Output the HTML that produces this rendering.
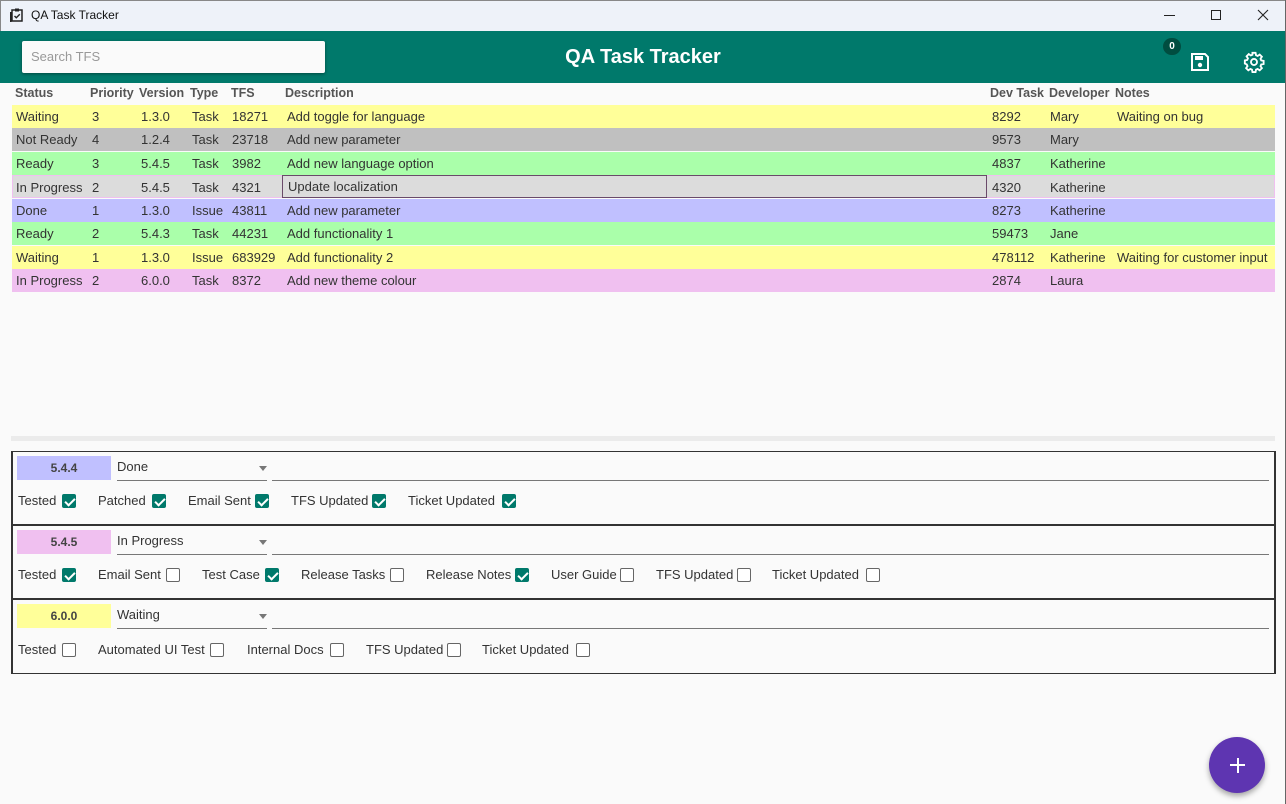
<!DOCTYPE html>
<html><head><meta charset="utf-8"><style>
*{margin:0;padding:0;box-sizing:border-box}
body{width:1286px;height:804px;overflow:hidden;background:#fafafa;font-family:"Liberation Sans",sans-serif;font-size:13px;color:#333;position:relative}
.a{position:absolute}
.tb{left:0;top:0;width:1286px;height:31px;background:#eef2f9;border:1px solid #888;border-bottom:none}
.hd{left:0;top:31px;width:1286px;height:52px;background:#00796b}
.row{position:absolute;left:12px;width:1263px;height:23px;line-height:23px}
.row span{position:absolute;top:0;white-space:nowrap}
.th{position:absolute;top:86px;font-weight:bold;color:#555;font-size:12.5px}
.pn{position:absolute;left:11px;width:1265px;border:2px solid #333;border-top-width:1px}
.ver{position:absolute;left:4px;width:94px;height:24px;line-height:24px;text-align:center;font-weight:bold;font-size:12px;color:#444}
.dd{position:absolute;left:104px;width:150px;height:25px;border-bottom:1px solid #777;line-height:22px}
.dd:after{content:"";position:absolute;right:0;top:10px;border:4px solid transparent;border-top:5px solid #777}
.ln{position:absolute;left:259px;right:5px;height:25px;border-bottom:1px solid #777}
.ck{position:absolute;white-space:nowrap;line-height:16px}
.cb{position:absolute;width:14px;height:14px;border:1.5px solid #666;border-radius:2px;background:#fff}
.cb.on{background:#00796b;border-color:#00796b}
.cb.on:after{content:"";position:absolute;left:3.5px;top:0.5px;width:4px;height:8px;border:solid #fff;border-width:0 2px 2px 0;transform:rotate(45deg)}
</style></head><body>
<div class="a tb"></div>
<svg class="a" style="left:9px;top:8px" width="15" height="15" viewBox="0 0 15 15"><rect x="3" y="2" width="10" height="11" fill="none" stroke="#222" stroke-width="1.5"/><rect x="1" y="4" width="1.5" height="10" fill="#222"/><rect x="6" y="0.5" width="4" height="3" fill="#222"/><path d="M5.5 8l1.8 1.8 3.5-3.5" fill="none" stroke="#222" stroke-width="1.4"/></svg>
<div class="a" style="left:31px;top:8px;font-size:12px;color:#111">QA Task Tracker</div>
<div class="a" style="left:1164px;top:15px;width:11px;height:1px;background:#222"></div>
<div class="a" style="left:1211px;top:10px;width:10px;height:10px;border:1px solid #222"></div>
<svg class="a" style="left:1257px;top:9px" width="12" height="12"><path d="M1 1L11 11M11 1L1 11" stroke="#222" stroke-width="1.1"/></svg>
<div class="a hd"></div>
<div class="a" style="left:22px;top:41px;width:303px;height:32px;background:#fafafa;border-radius:2px;box-shadow:0 1px 3px rgba(0,0,0,.4);line-height:32px;padding-left:9px;color:#999;font-size:13px">Search TFS</div>
<div class="a" style="left:0;width:1286px;top:46px;text-align:center;color:#fff;font-size:20px;font-weight:bold">QA Task Tracker</div>
<div class="a" style="left:1163px;top:38px;width:18px;height:17px;border-radius:9px;background:#004d40;color:#fff;font-size:10px;font-weight:bold;text-align:center;line-height:17px">0</div>
<svg class="a" style="left:1190px;top:52px" width="20" height="20" viewBox="0 0 20 20"><path d="M2 2h13l3 3v13H2z" fill="none" stroke="#fff" stroke-width="2"/><rect x="5" y="4" width="8" height="4" fill="#fff"/><circle cx="10" cy="13" r="2.2" fill="#fff"/></svg>
<svg class="a" style="left:1243px;top:51px" width="22" height="22" viewBox="0 0 24 24"><path fill="none" stroke="#fff" stroke-width="2" d="M10.3 2h3.4l.5 2.6 1.8.8 2.2-1.5 2.4 2.4-1.5 2.2.8 1.8 2.6.5v3.4l-2.6.5-.8 1.8 1.5 2.2-2.4 2.4-2.2-1.5-1.8.8-.5 2.6h-3.4l-.5-2.6-1.8-.8-2.2 1.5-2.4-2.4 1.5-2.2-.8-1.8L2 13.7v-3.4l2.6-.5.8-1.8-1.5-2.2 2.4-2.4 2.2 1.5 1.8-.8z"/><circle cx="12" cy="12" r="3.3" fill="none" stroke="#fff" stroke-width="2"/></svg>

<div class="th" style="left:15px">Status</div><div class="th" style="left:90px">Priority</div><div class="th" style="left:139px">Version</div><div class="th" style="left:190px">Type</div><div class="th" style="left:231px">TFS</div><div class="th" style="left:285px">Description</div><div class="th" style="left:990px">Dev Task</div><div class="th" style="left:1049px">Developer</div><div class="th" style="left:1115px">Notes</div>

<div class="row" style="top:105px;background:#ffff99"><span style="left:4px">Waiting</span><span style="left:80px">3</span><span style="left:129px">1.3.0</span><span style="left:180px">Task</span><span style="left:220px">18271</span><span style="left:275px">Add toggle for language</span><span style="left:980px">8292</span><span style="left:1038px">Mary</span><span style="left:1105px">Waiting on bug</span></div>
<div class="row" style="top:128px;background:#c0c0c0"><span style="left:4px">Not Ready</span><span style="left:80px">4</span><span style="left:129px">1.2.4</span><span style="left:180px">Task</span><span style="left:220px">23718</span><span style="left:275px">Add new parameter</span><span style="left:980px">9573</span><span style="left:1038px">Mary</span></div>
<div class="row" style="top:152px;background:#aaffaa"><span style="left:4px">Ready</span><span style="left:80px">3</span><span style="left:129px">5.4.5</span><span style="left:180px">Task</span><span style="left:220px">3982</span><span style="left:275px">Add new language option</span><span style="left:980px">4837</span><span style="left:1038px">Katherine</span></div>
<div class="row" style="top:175px;background:#dcdcdc;border:1px solid #f0c0f0"><span style="left:3px">In Progress</span><span style="left:79px">2</span><span style="left:128px">5.4.5</span><span style="left:179px">Task</span><span style="left:219px">4321</span><span style="left:269px;width:705px;height:23px;top:-1px;border:1px solid #6a4a6a;padding-left:5px;line-height:21px">Update localization</span><span style="left:979px">4320</span><span style="left:1037px">Katherine</span></div>
<div class="row" style="top:199px;background:#c0c0ff"><span style="left:4px">Done</span><span style="left:80px">1</span><span style="left:129px">1.3.0</span><span style="left:180px">Issue</span><span style="left:220px">43811</span><span style="left:275px">Add new parameter</span><span style="left:980px">8273</span><span style="left:1038px">Katherine</span></div>
<div class="row" style="top:222px;background:#aaffaa"><span style="left:4px">Ready</span><span style="left:80px">2</span><span style="left:129px">5.4.3</span><span style="left:180px">Task</span><span style="left:220px">44231</span><span style="left:275px">Add functionality 1</span><span style="left:980px">59473</span><span style="left:1038px">Jane</span></div>
<div class="row" style="top:246px;background:#ffff99"><span style="left:4px">Waiting</span><span style="left:80px">1</span><span style="left:129px">1.3.0</span><span style="left:180px">Issue</span><span style="left:220px">683929</span><span style="left:275px">Add functionality 2</span><span style="left:980px">478112</span><span style="left:1038px">Katherine</span><span style="left:1105px">Waiting for customer input</span></div>
<div class="row" style="top:269px;background:#f0c0f0"><span style="left:4px">In Progress</span><span style="left:80px">2</span><span style="left:129px">6.0.0</span><span style="left:180px">Task</span><span style="left:220px">8372</span><span style="left:275px">Add new theme colour</span><span style="left:980px">2874</span><span style="left:1038px">Laura</span></div>

<div class="a" style="left:11px;top:436px;width:1264px;height:5px;background:#ebebeb"></div>

<div class="pn" style="top:451px;height:75px">
<div class="ver" style="top:4px;background:#c0c0ff">5.4.4</div><div class="dd" style="top:4px">Done</div><div class="ln" style="top:4px"></div>
</div>
<div class="pn" style="top:525px;height:75px">
<div class="ver" style="top:4px;background:#f0c0f0">5.4.5</div><div class="dd" style="top:4px">In Progress</div><div class="ln" style="top:4px"></div>
</div>
<div class="pn" style="top:599px;height:75px;border-bottom-width:1px">
<div class="ver" style="top:4px;background:#ffff99">6.0.0</div><div class="dd" style="top:4px">Waiting</div><div class="ln" style="top:4px"></div>
</div>

<div class="ck" style="left:18px;top:493px">Tested</div><div class="cb on" style="left:62px;top:494px"></div>
<div class="ck" style="left:98px;top:493px">Patched</div><div class="cb on" style="left:152px;top:494px"></div>
<div class="ck" style="left:188px;top:493px">Email Sent</div><div class="cb on" style="left:255px;top:494px"></div>
<div class="ck" style="left:291px;top:493px">TFS Updated</div><div class="cb on" style="left:372px;top:494px"></div>
<div class="ck" style="left:408px;top:493px">Ticket Updated</div><div class="cb on" style="left:502px;top:494px"></div>

<div class="ck" style="left:18px;top:567px">Tested</div><div class="cb on" style="left:62px;top:568px"></div>
<div class="ck" style="left:98px;top:567px">Email Sent</div><div class="cb" style="left:166px;top:568px"></div>
<div class="ck" style="left:202px;top:567px">Test Case</div><div class="cb on" style="left:265px;top:568px"></div>
<div class="ck" style="left:301px;top:567px">Release Tasks</div><div class="cb" style="left:390px;top:568px"></div>
<div class="ck" style="left:426px;top:567px">Release Notes</div><div class="cb on" style="left:515px;top:568px"></div>
<div class="ck" style="left:551px;top:567px">User Guide</div><div class="cb" style="left:620px;top:568px"></div>
<div class="ck" style="left:656px;top:567px">TFS Updated</div><div class="cb" style="left:737px;top:568px"></div>
<div class="ck" style="left:772px;top:567px">Ticket Updated</div><div class="cb" style="left:866px;top:568px"></div>

<div class="ck" style="left:18px;top:642px">Tested</div><div class="cb" style="left:62px;top:643px"></div>
<div class="ck" style="left:98px;top:642px">Automated UI Test</div><div class="cb" style="left:210px;top:643px"></div>
<div class="ck" style="left:247px;top:642px">Internal Docs</div><div class="cb" style="left:330px;top:643px"></div>
<div class="ck" style="left:366px;top:642px">TFS Updated</div><div class="cb" style="left:447px;top:643px"></div>
<div class="ck" style="left:482px;top:642px">Ticket Updated</div><div class="cb" style="left:576px;top:643px"></div>

<div class="a" style="left:1209px;top:737px;width:56px;height:56px;border-radius:50%;background:#5e35b1;box-shadow:0 3px 6px rgba(0,0,0,.35)"></div>
<div class="a" style="left:1230px;top:764px;width:15px;height:2px;background:#fff"></div>
<div class="a" style="left:1236.5px;top:758px;width:2px;height:15px;background:#fff"></div>
<div class="a" style="left:1285px;top:0;width:1px;height:804px;background:#666"></div>
</body></html>
